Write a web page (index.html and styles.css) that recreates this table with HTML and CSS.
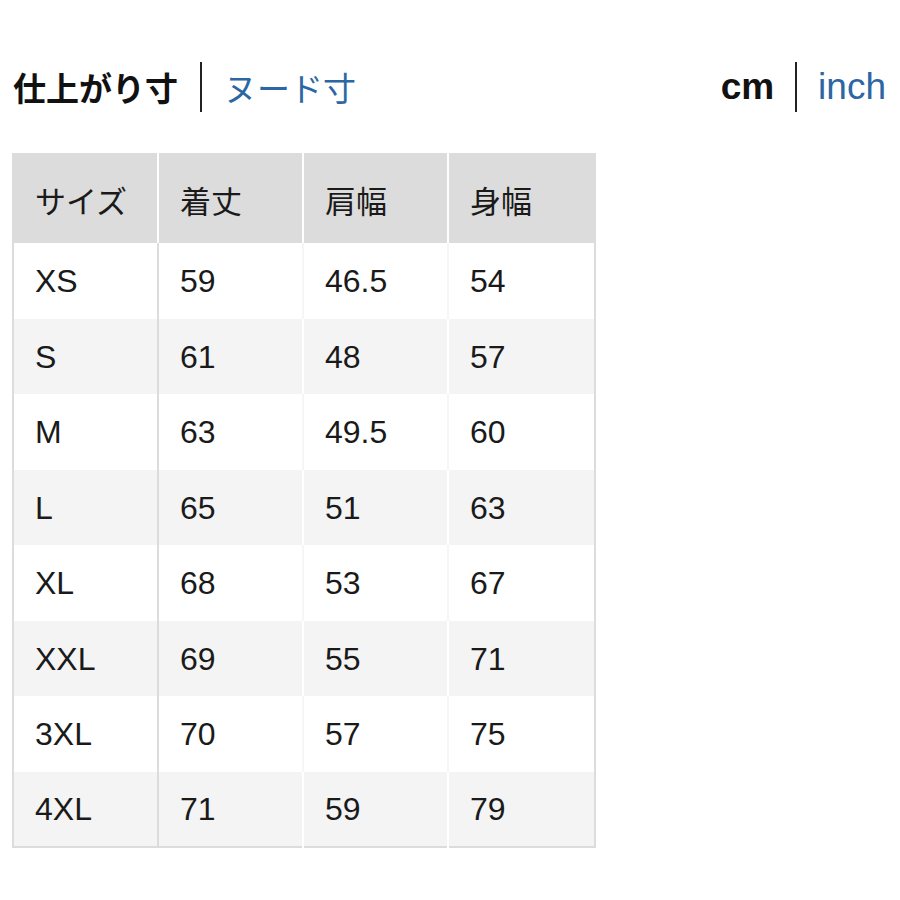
FILE: index.html
```html
<!DOCTYPE html>
<html lang="ja">
<head>
<meta charset="utf-8">
<link rel="stylesheet" href="styles.css">
</head>
<body>
<div class="page">
  <div class="toggles">
    <div class="toggle">
      <span class="opt active">仕上がり寸</span>
      <span class="sep"></span>
      <span class="opt link">ヌード寸</span>
    </div>
    <div class="toggle unit-toggle">
      <span class="opt active unit">cm</span>
      <span class="sep"></span>
      <span class="opt link unit">inch</span>
    </div>
  </div>
  <table class="size-table">
    <colgroup>
      <col class="c1"><col class="c2"><col class="c3"><col class="c4">
    </colgroup>
    <thead>
      <tr><th>サイズ</th><th>着丈</th><th>肩幅</th><th>身幅</th></tr>
    </thead>
    <tbody>
      <tr><td>XS</td><td>59</td><td>46.5</td><td>54</td></tr>
      <tr><td>S</td><td>61</td><td>48</td><td>57</td></tr>
      <tr><td>M</td><td>63</td><td>49.5</td><td>60</td></tr>
      <tr><td>L</td><td>65</td><td>51</td><td>63</td></tr>
      <tr><td>XL</td><td>68</td><td>53</td><td>67</td></tr>
      <tr><td>XXL</td><td>69</td><td>55</td><td>71</td></tr>
      <tr><td>3XL</td><td>70</td><td>57</td><td>75</td></tr>
      <tr><td>4XL</td><td>71</td><td>59</td><td>79</td></tr>
    </tbody>
  </table>
</div>
</body>
</html>
```

FILE: styles.css
```css
html, body {
  margin: 0;
  padding: 0;
  background: #ffffff;
}
body {
  font-family: "Liberation Sans", "Noto Sans CJK JP", sans-serif;
  color: #1a1a1a;
}
.page {
  padding: 62px 14px 0 12px;
}
.toggles {
  display: flex;
  justify-content: space-between;
  align-items: center;
  height: 50px;
}
.toggle {
  display: flex;
  align-items: center;
  gap: 22px;
}
.unit-toggle {
  gap: 21px;
}
.opt {
  font-size: 33px;
  line-height: 50px;
  font-family: "Noto Sans CJK JP", "Liberation Sans", sans-serif;
}
.opt.active {
  font-weight: 700;
  color: #111111;
  padding-left: 1px;
}
.opt.link {
  color: #2c66a3;
  font-weight: 400;
}
.opt.unit {
  font-family: "Liberation Sans", sans-serif;
  font-size: 37px;
}
.sep {
  width: 2px;
  height: 50px;
  background: #222222;
}
.size-table {
  margin-top: 41px;
  border-collapse: collapse;
  width: 584px;
  table-layout: fixed;
  border-left: 2px solid #dcdcdc;
  border-right: 2px solid #dcdcdc;
  border-bottom: 2px solid #dcdcdc;
}
.c1 { width: 145px; }
.c2 { width: 145px; }
.c3 { width: 145px; }
.c4 { width: auto; }
.size-table th,
.size-table td {
  box-sizing: border-box;
  text-align: left;
  padding: 0 0 0 21px;
  font-size: 32px;
  font-weight: 400;
  color: #1a1a1a;
  border-right: 2px solid #ffffff;
}
.size-table th {
  height: 90px;
  background: #dcdcdc;
  font-family: "Noto Sans CJK JP", sans-serif;
  font-size: 31px;
  padding-top: 2px;
}
.size-table td {
  height: 75.5px;
  padding-top: 2px;
}
.size-table th:last-child,
.size-table td:last-child {
  border-right: 0;
}
.size-table td:first-child {
  border-right: 2px solid #dcdcdc;
}
.size-table tbody tr:nth-child(odd) td {
  background: #ffffff;
}
.size-table tbody tr:nth-child(even) td {
  background: #f4f4f4;
}
.size-table tbody tr:nth-child(odd) td:not(:first-child):not(:last-child) {
  border-right-color: #f6f6f6;
}
```
